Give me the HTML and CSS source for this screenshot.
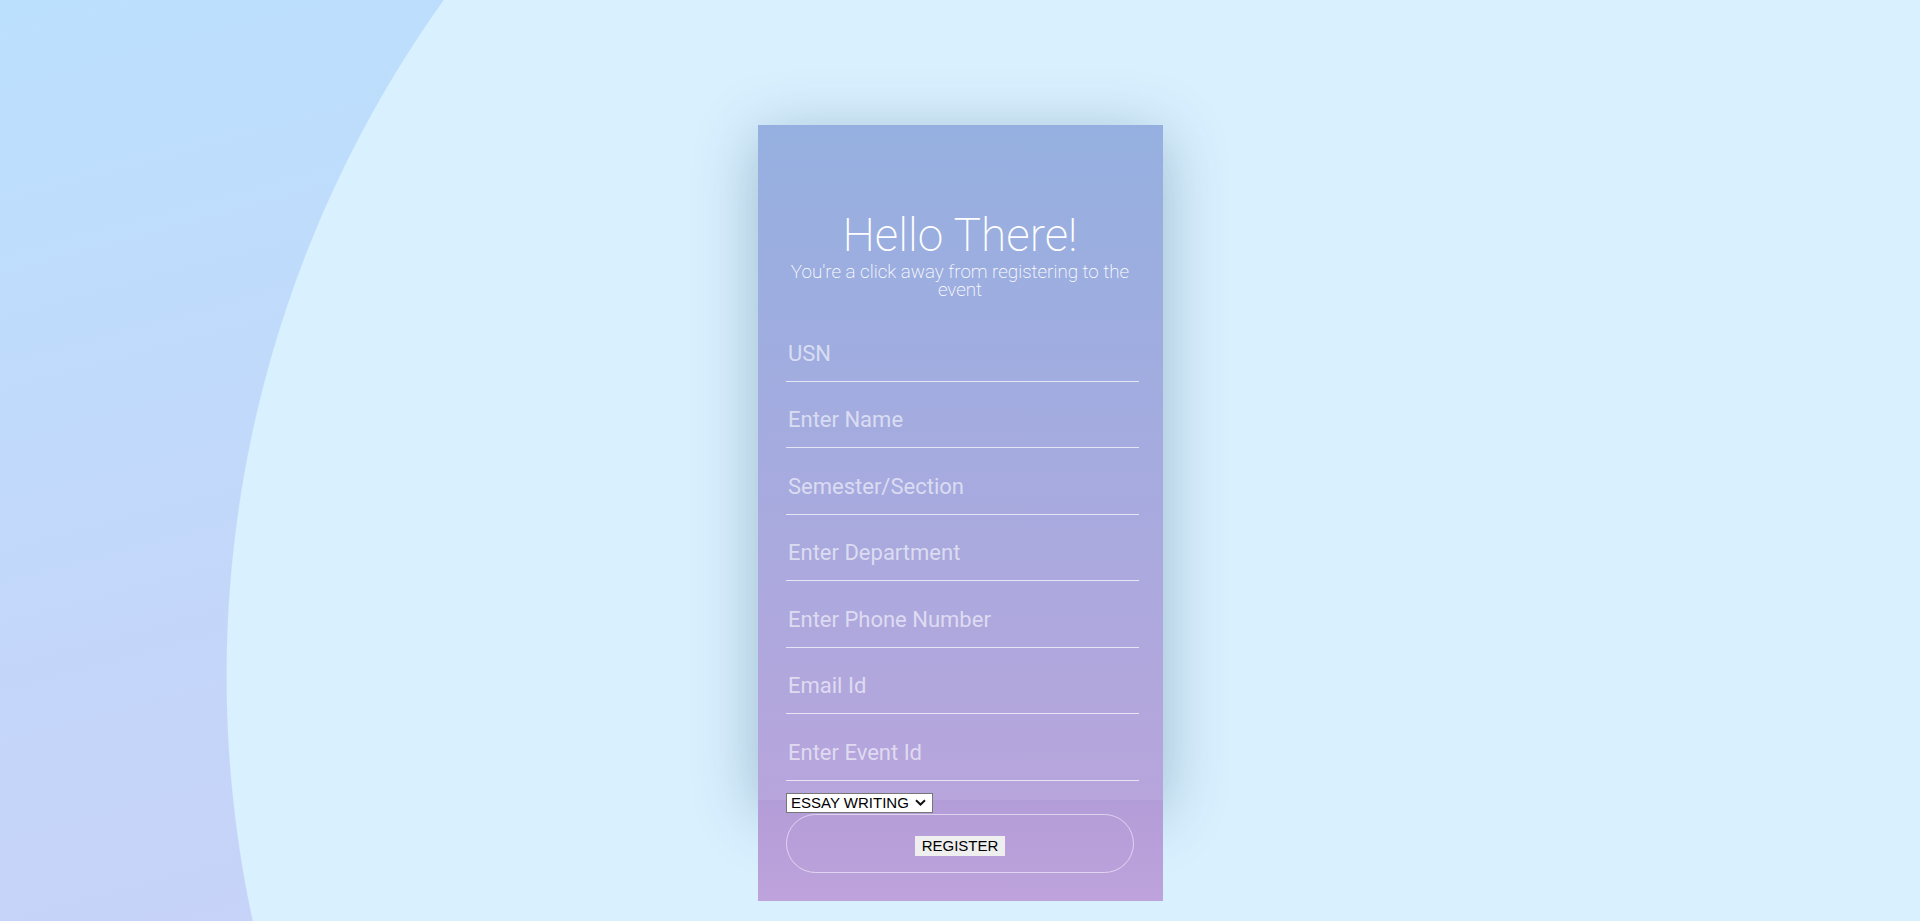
FILE: index.html
```html
<!DOCTYPE html>
<html lang="en">
<head>
<meta charset="utf-8">
<title>Register</title>
<link rel="stylesheet" href="styles.css">
</head>
<body>
<main class="page">
  <section class="card">
    <form class="panel">
      <h1 class="title">Hello There!</h1>
      <p class="subtitle">You're a click away from registering to the event</p>
      <div class="fields">
        <input class="field" type="text" placeholder="USN">
        <input class="field" type="text" placeholder="Enter Name">
        <input class="field" type="text" placeholder="Semester/Section">
        <input class="field" type="text" placeholder="Enter Department">
        <input class="field" type="text" placeholder="Enter Phone Number">
        <input class="field" type="text" placeholder="Email Id">
        <input class="field" type="text" placeholder="Enter Event Id">
      </div>
      <select class="event-select">
        <option>ESSAY WRITING</option>
      </select>
      <div class="pill">
        <button class="register" type="button">REGISTER</button>
      </div>
    </form>
    <div class="card-foot"></div>
  </section>
</main>
</body>
</html>
```

FILE: styles.css
```css
html, body {
  margin: 0;
  padding: 0;
  height: 100%;
}

body {
  overflow: hidden;
  background:
    radial-gradient(circle 1161px at 1387px 676px, #d9f0ff 99.9%, rgba(217, 240, 255, 0) 100%),
    linear-gradient(165deg, #bbe0fd 0%, #c4d6f9 50%, #cbcdf6 100%);
  font-family: Roboto, "Noto Sans", sans-serif;
}

.page {
  display: flex;
  justify-content: center;
  padding-top: 125px;
  padding-left: 1px;
}

.card {
  width: 405px;
  height: 776px;
  display: flex;
  flex-direction: column;
}

.panel {
  height: 675px;
  flex: none;
  box-sizing: border-box;
  padding: 83px 24px 0 28px;
  background: linear-gradient(180deg, #95b0e0 0%, #a5abdf 48%, #b7a5dc 100%);
  box-shadow: 0 12px 60px rgba(30, 70, 95, 0.32);
}

.card-foot {
  flex: 1;
  background: linear-gradient(180deg, #b39dd8 0%, #b89fd9 40%, #bea3dc 100%);
}

.title {
  margin: 0 0 0 -5px;
  font-size: 46px;
  line-height: 54px;
  font-weight: 200;
  color: #ffffff;
  text-align: center;
}

.subtitle {
  margin: 1px 0 0 -5px;
  font-size: 18.8px;
  line-height: 18px;
  font-weight: 200;
  color: #ffffff;
  text-align: center;
}

.fields {
  display: flex;
  flex-direction: column;
  gap: 18.5px;
  margin-top: 34.5px;
}

.field {
  display: block;
  box-sizing: border-box;
  width: 353px;
  height: 48px;
  margin: 0;
  padding: 0 2px 8px 2px;
  border: none;
  border-bottom: 1px solid rgba(255, 255, 255, 0.7);
  background: transparent;
  font-family: Roboto, "Noto Sans", sans-serif;
  font-size: 22px;
  font-weight: 400;
  color: #ffffff;
  outline: none;
}

.field::placeholder {
  color: rgba(255, 255, 255, 0.6);
}

.event-select {
  position: relative;
  display: block;
  box-sizing: border-box;
  height: 20px;
  margin: 12px 0 0 0;
  padding: 0 22px 0 4px;
  border: 1px solid #767676;
  border-radius: 0;
  -webkit-appearance: none;
  appearance: none;
  background-color: #ffffff;
  background-image: url("data:image/svg+xml,%3Csvg xmlns='http://www.w3.org/2000/svg' width='11' height='7' viewBox='0 0 11 7'%3E%3Cpath d='M1 1.2l4.5 4.3L10 1.2' fill='none' stroke='%23111' stroke-width='2'/%3E%3C/svg%3E");
  background-repeat: no-repeat;
  background-position: right 6px center;
  font-family: "Liberation Sans", Arial, sans-serif;
  font-size: 15px;
  line-height: 18px;
  color: #000000;
}

.pill {
  position: relative;
  box-sizing: border-box;
  width: 348px;
  height: 59px;
  margin-top: 1px;
  padding-top: 21px;
  display: flex;
  justify-content: center;
  align-items: flex-start;
  border: 1px solid rgba(255, 255, 255, 0.55);
  border-radius: 30px;
}

.register {
  box-sizing: border-box;
  height: 20px;
  margin: 0;
  padding: 0 7px;
  border: none;
  background: #efefef;
  font-family: "Liberation Sans", Arial, sans-serif;
  font-size: 15px;
  line-height: 20px;
  color: #000000;
}
```
